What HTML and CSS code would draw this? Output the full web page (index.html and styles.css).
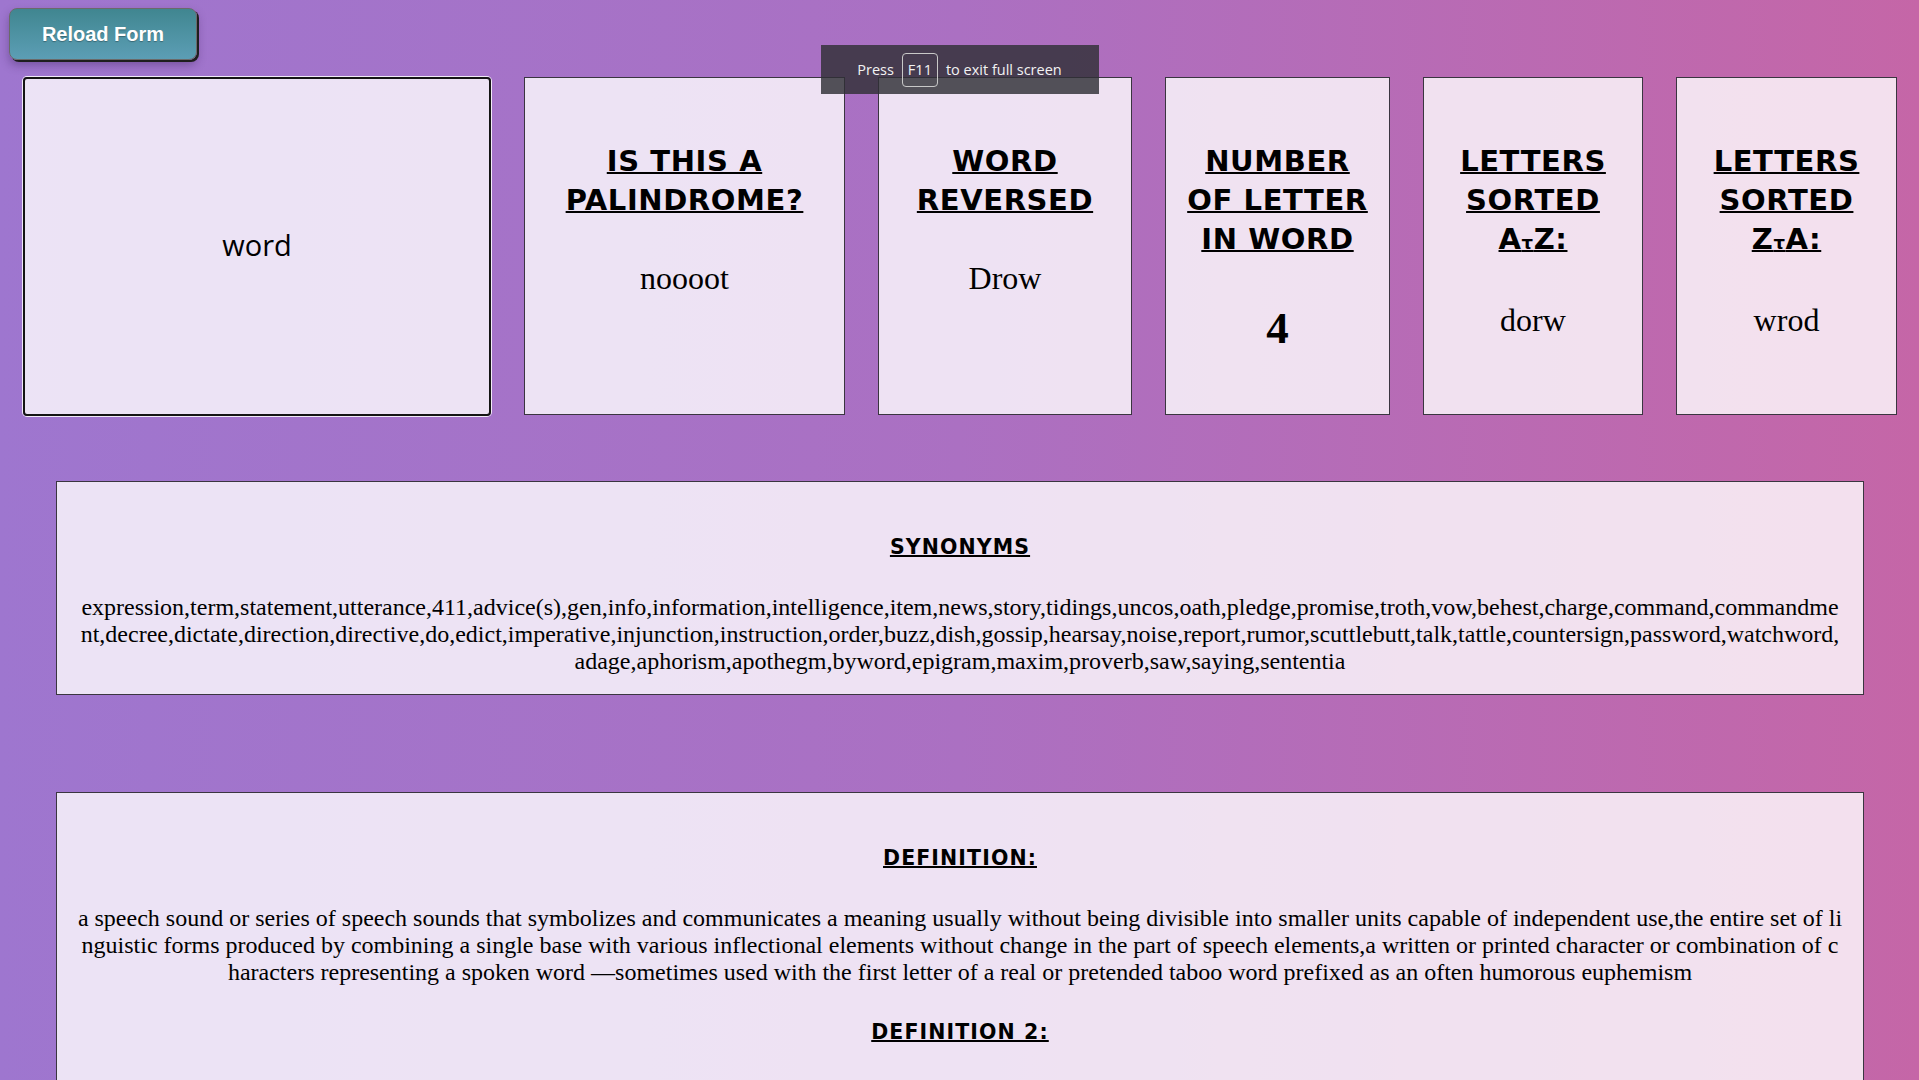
FILE: index.html
```html
<!DOCTYPE html>
<html lang="en">
<head>
<meta charset="utf-8">
<title>Word Tool</title>
<link rel="stylesheet" href="styles.css">
</head>
<body>
<div class="app">
  <button class="reload" type="button">Reload Form</button>

  <div class="row">
    <input class="word-input" type="text" value="word" autofocus>

    <div class="card card-palin">
      <h2 class="card-title">IS THIS A<br>PALINDROME?</h2>
      <p class="value">noooot</p>
    </div>
    <div class="card card-rev">
      <h2 class="card-title">WORD<br>REVERSED</h2>
      <p class="value">Drow</p>
    </div>
    <div class="card card-count">
      <h2 class="card-title">NUMBER<br>OF LETTER<br>IN WORD</h2>
      <p class="value value-num">4</p>
    </div>
    <div class="card card-az">
      <h2 class="card-title">LETTERS<br>SORTED<br>A<span class="arrow">τ</span>Z:</h2>
      <p class="value">dorw</p>
    </div>
    <div class="card card-za">
      <h2 class="card-title">LETTERS<br>SORTED<br>Z<span class="arrow">τ</span>A:</h2>
      <p class="value">wrod</p>
    </div>
  </div>

  <section class="box box-syn">
    <h3 class="box-title">SYNONYMS</h3>
    <p class="box-text">expression,term,statement,utterance,411,advice(s),gen,info,information,intelligence,item,news,story,tidings,uncos,oath,pledge,promise,troth,vow,behest,charge,command,commandment,decree,dictate,direction,directive,do,edict,imperative,injunction,instruction,order,buzz,dish,gossip,hearsay,noise,report,rumor,scuttlebutt,talk,tattle,countersign,password,watchword,adage,aphorism,apothegm,byword,epigram,maxim,proverb,saw,saying,sententia</p>
  </section>

  <section class="box box-def">
    <h3 class="box-title">DEFINITION:</h3>
    <p class="box-text">a speech sound or series of speech sounds that symbolizes and communicates a meaning usually without being divisible into smaller units capable of independent use,the entire set of linguistic forms produced by combining a single base with various inflectional elements without change in the part of speech elements,a written or printed character or combination of characters representing a spoken word —sometimes used with the first letter of a real or pretended taboo word prefixed as an often humorous euphemism</p>
    <h3 class="box-title box-title-next">DEFINITION 2:</h3>
  </section>
</div>

<div class="fs-bubble">
  <span>Press</span>
  <span class="key">F11</span>
  <span>to exit full screen</span>
</div>
</body>
</html>
```

FILE: styles.css
```css
html {
  scrollbar-width: none;
}
html::-webkit-scrollbar {
  display: none;
}

body {
  margin: 0;
  min-height: 100vh;
  background: linear-gradient(to right, #9e76cf 0%, #ab70c2 50%, #c566a7 100%);
  font-family: "Liberation Serif", "Times New Roman", serif;
  color: #000;
}

.app {
  padding: 8px 0 40px;
}

.reload {
  display: block;
  margin-left: 9px;
  width: 188px;
  height: 52px;
  box-sizing: border-box;
  border: 1px solid #6a6a6a;
  border-radius: 8px;
  background: linear-gradient(to bottom, #408690, #5c9eb5);
  box-shadow: 2px 2px 0 #1e1e1e, 0 5px 10px rgba(40, 20, 70, 0.35);
  color: #fff;
  font-family: "Liberation Sans", Arial, sans-serif;
  font-weight: bold;
  font-size: 20px;
  text-shadow: 0 1px 1px rgba(0, 0, 0, 0.3);
  padding: 0;
  cursor: pointer;
}

.row {
  display: flex;
  align-items: flex-start;
  gap: 33px;
  padding: 0 23px;
  margin-top: 17px;
}

.word-input {
  flex: none;
  width: 468px;
  height: 339px;
  box-sizing: border-box;
  border: 2px solid #141414;
  border-radius: 4px;
  box-shadow: 0 0 0 1px rgba(255, 255, 255, 0.85);
  background: rgba(255, 255, 255, 0.8);
  font-family: "Open Sans", "Noto Sans", sans-serif;
  font-size: 29px;
  color: #000;
  text-align: center;
  outline: none;
  padding: 0 0 4px;
}

.card {
  flex: none;
  box-sizing: border-box;
  height: 338px;
  border: 1px solid #3a3540;
  background: rgba(255, 255, 255, 0.8);
  text-align: center;
  overflow: hidden;
}

.card-palin { width: 321px; }
.card-rev { width: 254px; }
.card-count { width: 225px; }
.card-az { width: 220px; }
.card-za { width: 221px; }

.card-title {
  margin: 64px 0 0;
  font-family: "DejaVu Sans", sans-serif;
  font-weight: bold;
  font-size: 29px;
  line-height: 39px;
  letter-spacing: 0.6px;
  text-decoration: underline;
  text-decoration-thickness: 2px;
  text-underline-offset: 1px;
  white-space: nowrap;
}

.arrow {
  font-size: 18px;
}

.value {
  margin: 40px 0 0;
  font-size: 32px;
  line-height: 37px;
}

.value-num {
  margin-top: 43px;
  font-size: 45px;
  line-height: 52px;
  font-weight: bold;
}

.box {
  margin: 65px 55px 0 56px;
  padding: 0 20px 19px;
  border: 1px solid #3a3540;
  background: rgba(255, 255, 255, 0.8);
  text-align: center;
}

.box-def {
  margin-top: 97px;
  padding-bottom: 80px;
}

.box-title {
  margin: 53px 0 34px;
  font-family: "DejaVu Sans", sans-serif;
  font-weight: bold;
  font-size: 20.5px;
  line-height: 25px;
  letter-spacing: 1.1px;
  text-decoration: underline;
  text-underline-offset: 1px;
}

.box-title-next {
  margin-top: 34px;
}

.box-text {
  margin: 0;
  font-size: 24px;
  line-height: 27px;
  word-break: break-all;
}

.fs-bubble {
  position: absolute;
  top: 45px;
  left: 50%;
  transform: translateX(-50%);
  width: 278px;
  height: 49px;
  box-sizing: border-box;
  display: flex;
  align-items: center;
  justify-content: center;
  gap: 8px;
  background: rgba(48, 48, 54, 0.82);
  color: #f2f2f2;
  font-family: "Open Sans", "Noto Sans", sans-serif;
  font-size: 14.5px;
}

.fs-bubble .key {
  display: flex;
  align-items: center;
  justify-content: center;
  width: 36px;
  height: 34px;
  box-sizing: border-box;
  border: 1px solid #c8c8c8;
  border-radius: 4px;
}
```
